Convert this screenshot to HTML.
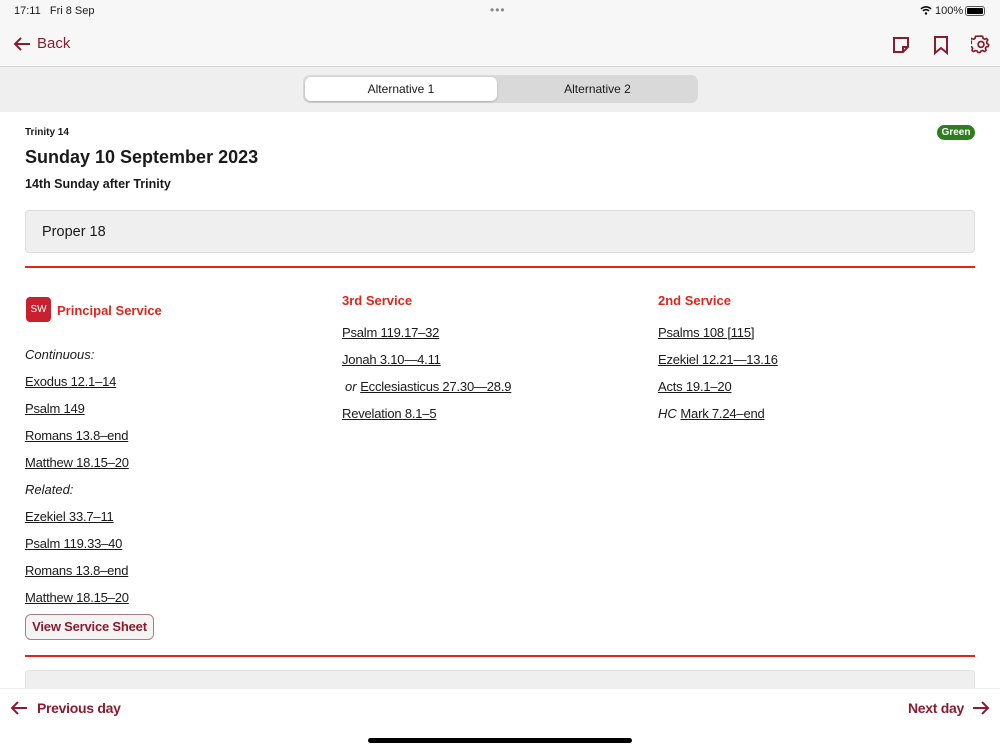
<!DOCTYPE html>
<html><head><meta charset="utf-8"><style>
*{margin:0;padding:0;box-sizing:border-box}
body{width:1000px;height:750px;overflow:hidden;background:#fff;font-family:"Liberation Sans",sans-serif;color:#1a1a1a;position:relative}
.a{position:absolute;white-space:nowrap}
.top{position:absolute;left:0;top:0;width:1000px;height:67px;background:#f7f7f7;border-bottom:1px solid #d6d6d6}
.seg{position:absolute;left:0;top:67px;width:1000px;height:45px;background:#efefef}
.mar{color:#8a1c2e}
.red{color:#e0251c;font-weight:bold;font-size:13px}
.lk{font-size:13px;text-decoration:underline;letter-spacing:-0.2px}
.it{font-size:13px;font-style:italic}
</style></head><body>
<div class="top"></div>
<div class="a" style="left:14px;top:5px;font-size:11px">17:11&nbsp;&nbsp; Fri 8 Sep</div>
<div class="a" style="left:490px;top:3px;font-size:12px;color:#888;letter-spacing:1px">•••</div>
<div class="a" style="left:920px;top:5px;font-size:11px">
<svg width="12" height="10" viewBox="0 0 12 10" style="vertical-align:-1px"><path d="M1 4a7 7 0 0 1 10 0M3 6a4 4 0 0 1 6 0" stroke="#000" stroke-width="1.5" fill="none"/><circle cx="6" cy="8.5" r="1.2"/></svg> 100%</div>
<div class="a" style="left:965px;top:6px;width:20px;height:10px;border:1px solid #555;border-radius:3px;padding:1px"><div style="width:100%;height:100%;background:#000;border-radius:1px"></div></div>
<svg class="a" style="left:12px;top:36px" width="20" height="16" viewBox="0 0 20 16"><path d="M18 8H3M9 2L3 8l6 6" stroke="#8a1c2e" stroke-width="2" fill="none"/></svg>
<div class="a mar" style="left:37px;top:35px;font-size:15px">Back</div>
<svg class="a" style="left:891px;top:35px" width="20" height="20" viewBox="0 0 20 20"><path d="M3 3h14v9l-5 5H3z M12 17v-5h5" stroke="#8a1c2e" stroke-width="2" fill="none"/></svg>
<svg class="a" style="left:932px;top:35px" width="18" height="20" viewBox="0 0 18 20"><path d="M3 2h12v16l-6-5-6 5z" stroke="#8a1c2e" stroke-width="2" fill="none"/></svg>
<svg class="a" style="left:971px;top:34px" width="20" height="20" viewBox="0 0 24 24"><path d="M12 2.5l2 .3.5 2.5 1.8 1 2.4-.9 1.4 1.7-1.3 2.2.3 2 2.1 1.5-.4 2.1-2.5.6-1 1.8.8 2.4-1.7 1.4-2.2-1.2-2 .3-1.5 2.1h-2.1l-1.5-2.1-2-.3-2.2 1.2-1.7-1.4.8-2.4-1-1.8-2.5-.6-.4-2.1 2.1-1.5.3-2-1.3-2.2 1.4-1.7 2.4.9 1.8-1 .5-2.5z" stroke="#8a1c2e" stroke-width="2" fill="none" stroke-linejoin="round"/><circle cx="12" cy="12.5" r="3.5" stroke="#8a1c2e" stroke-width="2" fill="none"/></svg>
<div class="seg"></div>
<div class="a" style="left:303px;top:75px;width:395px;height:28px;background:#d9d9d9;border-radius:7px"></div>
<div class="a" style="left:305px;top:77px;width:192px;height:24px;background:#fff;border-radius:6px;box-shadow:0 1px 2px rgba(0,0,0,.2);text-align:center;line-height:24px;font-size:12px">Alternative 1</div>
<div class="a" style="left:499px;top:77px;width:197px;height:24px;text-align:center;line-height:24px;font-size:12px">Alternative 2</div>
<div class="a" style="left:25px;top:127px;font-size:10px;font-weight:bold">Trinity 14</div>
<div class="a" style="left:937px;top:125px;width:38px;height:15px;background:#2e7d1e;border-radius:8px;color:#fff;font-size:10px;font-weight:bold;text-align:center;line-height:15px">Green</div>
<div class="a" style="left:25px;top:147px;font-size:18px;font-weight:bold">Sunday 10 September 2023</div>
<div class="a" style="left:25px;top:177px;font-size:12.5px;font-weight:bold">14th Sunday after Trinity</div>
<div class="a" style="left:25px;top:210px;width:950px;height:43px;background:#efefef;border:1px solid #ddd;border-radius:4px;font-size:14.5px;line-height:43px;padding-left:16px">Proper 18</div>
<div class="a" style="left:25px;top:266px;width:950px;height:2px;background:#e0251c"></div>
<div class="a" style="left:26px;top:297px;width:25px;height:25px;background:#c8202f;border-radius:4px;color:#fff;font-size:10px;text-align:center;line-height:25px">SW</div>
<div class="a red" style="left:57px;top:303px">Principal Service</div>
<div class="a it" style="left:25px;top:347px">Continuous:</div>
<div class="a lk" style="left:25px;top:374px">Exodus 12.1–14</div>
<div class="a lk" style="left:25px;top:401px">Psalm 149</div>
<div class="a lk" style="left:25px;top:428px">Romans 13.8–end</div>
<div class="a lk" style="left:25px;top:455px">Matthew 18.15–20</div>
<div class="a it" style="left:25px;top:482px">Related:</div>
<div class="a lk" style="left:25px;top:509px">Ezekiel 33.7–11</div>
<div class="a lk" style="left:25px;top:536px">Psalm 119.33–40</div>
<div class="a lk" style="left:25px;top:563px">Romans 13.8–end</div>
<div class="a lk" style="left:25px;top:590px">Matthew 18.15–20</div>
<div class="a mar" style="left:25px;top:614px;width:129px;height:26px;border:1.5px solid #b07a84;border-radius:6px;background:#f4f4f4;font-size:13px;font-weight:bold;text-align:center;line-height:23px;letter-spacing:-0.2px">View Service Sheet</div>
<div class="a red" style="left:342px;top:293px">3rd Service</div>
<div class="a lk" style="left:342px;top:325px">Psalm 119.17–32</div>
<div class="a lk" style="left:342px;top:352px">Jonah 3.10—4.11</div>
<div class="a" style="left:345px;top:379px;font-size:13px"><i>or</i> <span class="lk">Ecclesiasticus 27.30—28.9</span></div>
<div class="a lk" style="left:342px;top:406px">Revelation 8.1–5</div>
<div class="a red" style="left:658px;top:293px">2nd Service</div>
<div class="a lk" style="left:658px;top:325px">Psalms 108 [115]</div>
<div class="a lk" style="left:658px;top:352px">Ezekiel 12.21—13.16</div>
<div class="a lk" style="left:658px;top:379px">Acts 19.1–20</div>
<div class="a" style="left:658px;top:406px;font-size:13px"><i>HC</i> <span class="lk">Mark 7.24–end</span></div>
<div class="a" style="left:25px;top:655px;width:950px;height:2px;background:#e0251c"></div>
<div class="a" style="left:25px;top:670px;width:950px;height:30px;background:#efefef;border:1px solid #e2e2e2;border-radius:4px"></div>
<div class="a" style="left:0;top:688px;width:1000px;height:62px;background:#fff;border-top:1px solid #eee"></div>
<svg class="a" style="left:9px;top:700px" width="20" height="16" viewBox="0 0 20 16"><path d="M18 8H3M9 2L3 8l6 6" stroke="#8a1c2e" stroke-width="2" fill="none"/></svg>
<div class="a mar" style="left:37px;top:700px;font-size:14px;font-weight:bold;letter-spacing:-0.3px">Previous day</div>
<div class="a mar" style="left:908px;top:700px;font-size:14px;font-weight:bold;letter-spacing:-0.3px">Next day</div>
<svg class="a" style="left:971px;top:700px" width="20" height="16" viewBox="0 0 20 16"><path d="M2 8h15M11 2l6 6-6 6" stroke="#8a1c2e" stroke-width="2" fill="none"/></svg>
<div class="a" style="left:368px;top:738px;width:264px;height:5px;background:#000;border-radius:3px"></div>
</body></html>
